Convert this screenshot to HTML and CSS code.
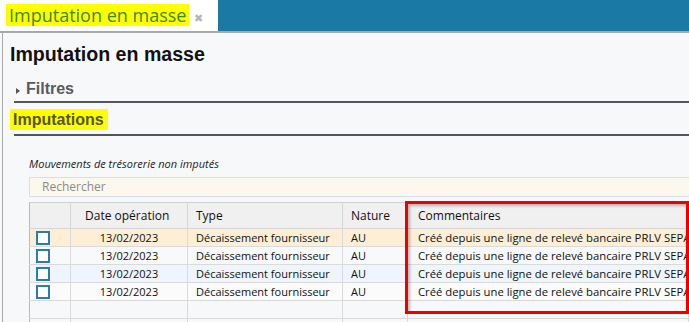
FILE: index.html
```html
<!DOCTYPE html>
<html lang="fr">
<head>
  <meta charset="UTF-8"/>
  <title>Imputation en masse</title>
  <link rel="stylesheet" href="styles.css">
</head>
<body>

  <div class="topbar">
    <div class="tab">
      <span class="tab-title">Imputation en masse</span>
      <span class="tab-close">&#x2716;</span>
    </div>
    <div class="topbar-fill"></div>
  </div>

  <div class="panel">
    <h1>Imputation en masse</h1>

    <div class="section">
      <span class="caret"></span>
      <h2>Filtres</h2>
    </div>

    <div class="section">
      <h2 class="mark">Imputations</h2>
    </div>

    <div class="content">
      <p class="caption">Mouvements de trésorerie non imputés</p>
      <div class="search">Rechercher</div>

      <div class="grid-wrap">
        <table class="grid">
          <thead>
            <tr>
              <th class="col-check"></th>
              <th class="col-date">Date opération</th>
              <th class="col-type">Type</th>
              <th class="col-nature">Nature</th>
              <th class="col-comment">Commentaires</th>
            </tr>
          </thead>
          <tbody id="grid-body"></tbody>
        </table>
        <div class="focus-box"></div>
      </div>
    </div>
  </div>

  <script>
    const rows = [
      { date: "13/02/2023", type: "Décaissement fournisseur", nature: "AU", comment: "Créé depuis une ligne de relevé bancaire PRLV SEPA" },
      { date: "13/02/2023", type: "Décaissement fournisseur", nature: "AU", comment: "Créé depuis une ligne de relevé bancaire PRLV SEPA" },
      { date: "13/02/2023", type: "Décaissement fournisseur", nature: "AU", comment: "Créé depuis une ligne de relevé bancaire PRLV SEPA" },
      { date: "13/02/2023", type: "Décaissement fournisseur", nature: "AU", comment: "Créé depuis une ligne de relevé bancaire PRLV SEPA" }
    ];

    const tbody = document.getElementById("grid-body");
    rows.forEach((r, i) => {
      tbody.innerHTML += `
        <tr class="row-${i + 1}">
          <td class="col-check"><span class="check"></span></td>
          <td class="col-date">${r.date}</td>
          <td>${r.type}</td>
          <td>${r.nature}</td>
          <td class="col-comment">${r.comment}</td>
        </tr>
      `;
    });
    tbody.innerHTML += `<tr class="empty"><td></td><td></td><td></td><td></td><td></td></tr>`;
    tbody.innerHTML += `<tr class="empty"><td></td><td></td><td></td><td></td><td></td></tr>`;
  </script>
</body>
</html>
```

FILE: styles.css
```css
* {
  box-sizing: border-box;
  margin: 0;
  padding: 0;
}

body {
  font-family: 'Open Sans', 'Noto Sans', sans-serif;
  background: #f7f8fa;
  color: #222;
  overflow: hidden;
  width: 689px;
  height: 322px;
}

.topbar {
  display: flex;
  height: 33px;
  background: white;
  border-bottom: 2px solid #a9a9a9;
}

.tab {
  width: 218px;
  display: flex;
  align-items: flex-start;
  padding: 4px 0 0 6px;
}

.tab-title {
  background: #ffff00;
  color: #3d8a1c;
  font-size: 18px;
  line-height: 22px;
  padding: 0 3px;
}

.tab-close {
  color: #b5b5b5;
  font-size: 11px;
  margin: 6px 0 0 5px;
}

.topbar-fill {
  flex: 1;
  height: 31px;
  background: #1b79a6;
}

.panel {
  margin-left: 2px;
  border-left: 1px solid #a9a9a9;
  height: 289px;
  padding-left: 7px;
}

h1 {
  font-family: 'Liberation Sans', Arial, sans-serif;
  font-size: 19.6px;
  font-weight: bold;
  color: #111;
  padding-top: 10px;
  height: 47px;
}

.section {
  display: flex;
  align-items: center;
  margin-left: 4px;
  border-bottom: 2px solid #50565c;
}

.section h2 {
  font-family: 'Liberation Sans', Arial, sans-serif;
  font-size: 16px;
  font-weight: bold;
  color: #555b61;
}

.section:nth-of-type(1) {
  height: 23px;
  padding-bottom: 4px;
}

.section:nth-of-type(2) {
  height: 33px;
  padding-top: 6px;
  padding-bottom: 4px;
}

.caret {
  width: 0;
  height: 0;
  border-top: 3px solid transparent;
  border-bottom: 3px solid transparent;
  border-left: 4px solid #555;
  margin: 4px 6px 0 2px;
}

.section h2.mark {
  background: #ffff00;
  color: #55551a;
  margin-left: -4px;
  padding: 2px 4px 0 3px;
  height: 21px;
}

.content {
  padding: 20px 0 0 19px;
}

.caption {
  font-size: 11px;
  font-style: italic;
  color: #222;
  height: 21px;
}

.search {
  height: 20px;
  background: #fcf8ee;
  border: 1px solid #d9dde7;
  border-right: none;
  color: #8a8a8a;
  font-size: 12px;
  line-height: 18px;
  padding-left: 12px;
  margin-bottom: 5px;
}

.grid-wrap {
  position: relative;
}

.grid {
  width: 660px;
  border-collapse: collapse;
  border-left: 1px solid #b9b9b9;
  border-top: 1px solid #cfcfcf;
  font-size: 11px;
  color: #111;
  table-layout: fixed;
}

.grid th {
  background: #f0f0f0;
  font-weight: normal;
  font-size: 12px;
  text-align: left;
  height: 26px;
  padding: 0 0 0 8px;
  border-right: 1px solid #d6d6d6;
  border-bottom: 1px solid #d6d6d6;
  white-space: nowrap;
}

.grid td {
  height: 18px;
  padding: 0 0 0 8px;
  border-right: 1px solid #dadada;
  border-bottom: 1px solid #dadada;
  white-space: nowrap;
  overflow: hidden;
  line-height: 16px;
}

.grid th.col-date {
  padding-left: 14px;
}

.grid td.col-date {
  text-align: center;
  padding-left: 0;
  padding-right: 0;
}

.grid .col-comment {
  padding-left: 10px;
}

.grid td.col-comment {
  font-size: 11.3px;
}

.col-check {
  width: 41px;
}

.col-date {
  width: 117px;
}

.col-type {
  width: 155px;
}

.col-nature {
  width: 65px;
}

.grid td.col-check {
  padding-left: 6px;
}

.check {
  display: block;
  width: 14px;
  height: 14px;
  border: 2px solid #2c7cad;
  background: white;
}

.row-1 td {
  background: #fcefd6;
}

.row-2 td {
  background: #f8f9fb;
}

.row-3 td {
  background: #eef5fc;
}

.row-4 td {
  background: #fbfbfc;
}

.empty td {
  background: #f7f8fa;
}

.focus-box {
  position: absolute;
  left: 376px;
  top: -1px;
  width: 284px;
  height: 113px;
  border: 3px solid #ec0000;
  box-shadow: inset 2px 2px 3px rgba(0, 0, 0, 0.25);
}
```
